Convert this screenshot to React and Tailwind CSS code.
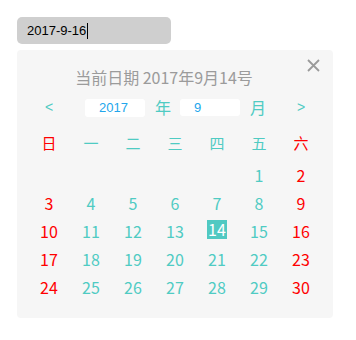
import React from "react";

const TEAL = "text-[#4fcbc3]";
const RED = "text-[#ff0000]";

const weeks = [
  [null, null, null, null, null, 1, 2],
  [3, 4, 5, 6, 7, 8, 9],
  [10, 11, 12, 13, 14, 15, 16],
  [17, 18, 19, 20, 21, 22, 23],
  [24, 25, 26, 27, 28, 29, 30],
];

const weekdays = ["日", "一", "二", "三", "四", "五", "六"];

export default function App() {
  return (
    <div
      className="w-[356px] h-[340px] bg-white pt-[17px] pl-[17px]"
      style={{ fontFamily: '"Noto Sans CJK SC", "Noto Sans", sans-serif' }}
    >
      <div className="w-[154px] h-[27px] rounded-[5px] bg-[#cfcfcf] flex items-center pl-[10px] text-[13px] text-black font-['Liberation_Sans',sans-serif]">
        <span>2017-9-16</span>
        <span className="w-px h-[16px] bg-black ml-px" />
      </div>

      <div className="relative mt-[6px] w-[316px] rounded-[4px] bg-[#f6f6f6] px-[11px] pt-[15px] pb-[17px]">
        <button className="absolute right-[13px] top-[8px] w-[14px] h-[14px] flex items-center justify-center">
          <svg width="13" height="13" viewBox="0 0 13 13">
            <path d="M1 1 L12 12 M12 1 L1 12" stroke="#9a9a9a" strokeWidth="1.8" />
          </svg>
        </button>

        <div className="h-[24px] leading-[24px] text-center text-[16px] text-[#9b9b9b] pr-[22px]">
          当前日期 2017年9月14号
        </div>

        <div className="mt-[10px] h-[17px] flex items-center">
          <span className={`w-[42px] text-center text-[14px] font-['Liberation_Sans',sans-serif] ${TEAL}`}>&lt;</span>
          <div className="ml-[15px] w-[60px] h-[18px] rounded-[3px] bg-white pl-[14px] flex items-center text-[13px] text-[#22a6ec] font-['Liberation_Sans',sans-serif]">
            2017
          </div>
          <span className={`ml-[10px] text-[16px] leading-[17px] ${TEAL}`}>年</span>
          <div className="ml-[9px] w-[60px] h-[17px] rounded-[3px] bg-white pl-[14px] flex items-center text-[13px] text-[#22a6ec] font-['Liberation_Sans',sans-serif]">
            9
          </div>
          <span className={`ml-[10px] text-[16px] leading-[17px] ${TEAL}`}>月</span>
          <span className={`ml-auto w-[42px] text-center text-[14px] font-['Liberation_Sans',sans-serif] ${TEAL}`}>&gt;</span>
        </div>

        <div className="mt-[13px] grid grid-cols-7 h-[28px] items-center">
          {weekdays.map((w, i) => (
            <div
              key={w}
              className={`text-center text-[15px] ${i === 0 || i === 6 ? RED : TEAL}`}
            >
              {w}
            </div>
          ))}
        </div>

        <div className="mt-[4px]">
          {weeks.map((row, r) => (
            <div key={r} className="grid grid-cols-7 h-[28px] items-center">
              {row.map((d, i) => (
                <div key={i} className="flex justify-center">
                  {d === null ? null : d === 14 ? (
                    <span className="w-[20px] h-[19px] bg-[#50c9c2] text-white text-[16px] leading-[19px] text-center -mt-[3px]">
                      {d}
                    </span>
                  ) : (
                    <span className={`text-[16px] ${i === 0 || i === 6 ? RED : TEAL}`}>{d}</span>
                  )}
                </div>
              ))}
            </div>
          ))}
        </div>
      </div>
    </div>
  );
}
